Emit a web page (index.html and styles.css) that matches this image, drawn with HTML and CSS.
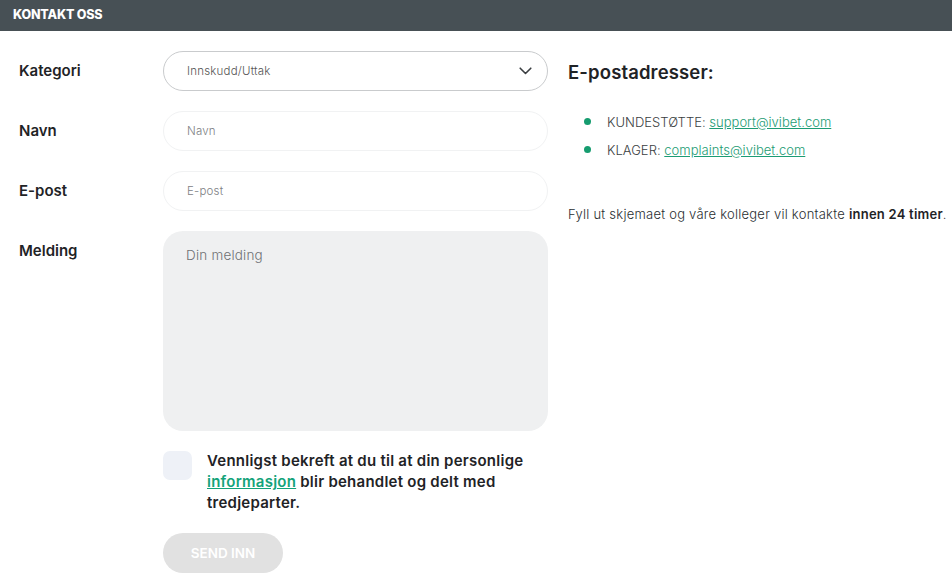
FILE: index.html
```html
<!DOCTYPE html>
<html lang="no">
<head>
    <meta charset="UTF-8">
    <meta name="viewport" content="width=device-width, initial-scale=1.0">
    <title>Kontakt oss</title>
    <link rel="stylesheet" href="styles.css">
</head>
<body>
    <div class="topbar">KONTAKT OSS</div>
    <div class="content">
        <form class="contact-form">
            <div class="row">
                <label class="label">Kategori</label>
                <div class="select">
                    <span>Innskudd/Uttak</span>
                    <svg width="13" height="8" viewBox="0 0 13 8"><path d="M1.2 1.2l5.3 5.3 5.3-5.3" fill="none" stroke="#3a3e41" stroke-width="1.6" stroke-linecap="round" stroke-linejoin="round"/></svg>
                </div>
            </div>
            <div class="row">
                <label class="label">Navn</label>
                <input class="field" type="text" placeholder="Navn">
            </div>
            <div class="row">
                <label class="label">E-post</label>
                <input class="field" type="text" placeholder="E-post">
            </div>
            <div class="row">
                <label class="label">Melding</label>
                <textarea class="message" placeholder="Din melding"></textarea>
            </div>
            <div class="row">
                <span class="label"></span>
                <div class="consent">
                    <span class="checkbox"></span>
                    <p>Vennligst bekreft at du til at din personlige <a href="#">informasjon</a> blir behandlet og delt med tredjeparter.</p>
                </div>
            </div>
            <div class="row">
                <span class="label"></span>
                <button type="button" class="submit">SEND INN</button>
            </div>
        </form>
        <div class="info">
            <h2>E-postadresser:</h2>
            <ul>
                <li>KUNDESTØTTE: <a href="#">support@ivibet.com</a></li>
                <li>KLAGER: <a href="#">complaints@ivibet.com</a></li>
            </ul>
            <p>Fyll ut skjemaet og våre kolleger vil kontakte <b>innen 24 timer</b>.</p>
        </div>
    </div>
</body>
</html>
```
FILE: styles.css
```css
body {
    margin: 0;
    font-family: "Inter", "Lato", sans-serif;
    background-color: #ffffff;
    color: #1f2326;
}
.topbar {
    height: 31px;
    background-color: #475055;
    color: #ffffff;
    font-weight: 800;
    font-size: 12.5px;
    line-height: 29px;
    padding-left: 13px;
    letter-spacing: -0.2px;
}
.content {
    display: flex;
    padding: 20px 0 0 19px;
}
.contact-form {
    width: 529px;
}
.row {
    display: flex;
    margin-bottom: 20px;
}
.label {
    width: 144px;
    flex-shrink: 0;
    font-size: 15px;
    font-weight: 600;
    line-height: 40px;
}
.select, .field {
    box-sizing: border-box;
    width: 385px;
    height: 40px;
    border-radius: 20px;
    font-family: inherit;
    font-size: 11.5px;
    letter-spacing: 0.2px;
}
.select {
    display: flex;
    align-items: center;
    justify-content: space-between;
    padding: 0 15px 0 23px;
    border: 1px solid #c9cbcd;
    color: #555;
    font-weight: 300;
}
.field {
    border: 1px solid #f1f2f3;
    padding: 0 23px;
    outline: none;
    font-weight: 300;
}
.field::placeholder {
    color: #7d8083;
}
.message {
    box-sizing: border-box;
    width: 385px;
    height: 200px;
    border: none;
    border-radius: 20px;
    background-color: #eff0f1;
    padding: 16px 23px;
    font-family: inherit;
    font-size: 13.5px;
    font-weight: 300;
    letter-spacing: 0.2px;
    resize: none;
    outline: none;
}
.message::placeholder {
    color: #6e7174;
}
.consent {
    display: flex;
    width: 385px;
}
.checkbox {
    width: 29px;
    height: 29px;
    flex-shrink: 0;
    border-radius: 7px;
    background-color: #eef1f7;
    margin-right: 15px;
}
.consent p {
    margin: 0;
    font-size: 15px;
    font-weight: 600;
    line-height: 21px;
    margin-top: -1px;
    letter-spacing: 0.25px;
}
.consent a {
    color: #14a37a;
}
.submit {
    width: 120px;
    height: 40px;
    border: none;
    border-radius: 20px;
    background-color: #e1e1e1;
    color: #ffffff;
    font-family: inherit;
    font-weight: 600;
    font-size: 13.5px;
    letter-spacing: 0;
}
.info {
    padding-left: 20px;
    font-size: 13px;
}
.info h2 {
    margin: 9px 0 0;
    font-size: 18.5px;
    font-weight: 600;
    line-height: 24px;
    letter-spacing: 0.13px;
}
.info ul {
    margin: 30px 0 0;
    padding-left: 39px;
    list-style: none;
}
.info li {
    position: relative;
    line-height: 16px;
    margin-bottom: 12px;
    color: #3a3e41;
    font-weight: 300;
    letter-spacing: 0.02px;
}
.info li::before {
    content: "";
    position: absolute;
    left: -23px;
    top: 4px;
    width: 7px;
    height: 7px;
    border-radius: 50%;
    background-color: #169c6f;
}
.info a {
    color: #1c9c74;
}
.info p {
    margin: 48px 0 0;
    color: #2a2e31;
    font-weight: 300;
    letter-spacing: 0.24px;
    white-space: nowrap;
}
.info p b {
    color: #1f2326;
    font-weight: 600;
}
```
